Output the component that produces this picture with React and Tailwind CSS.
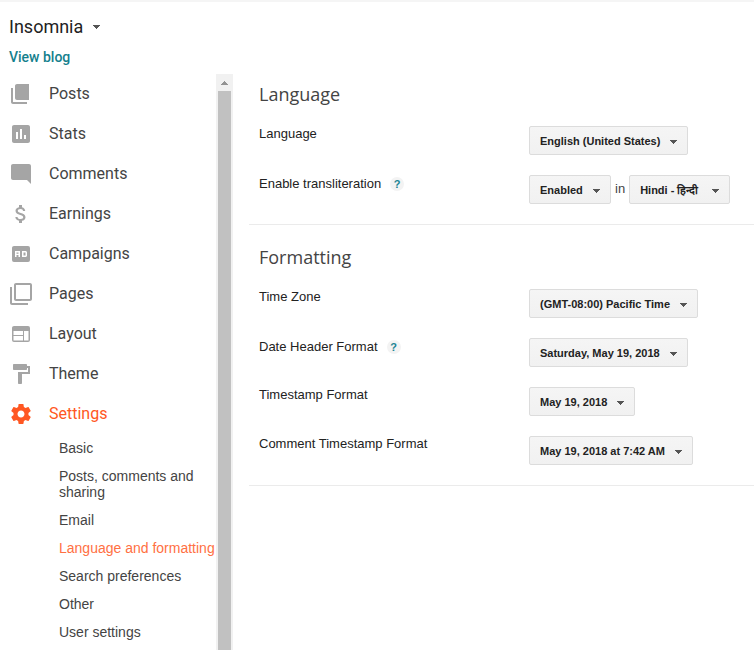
import React from "react";

const Svg = ({ children, className = "" }) => (
  <svg width="24" height="24" viewBox="0 0 24 24" fill="currentColor" className={"shrink-0 " + className}>
    {children}
  </svg>
);

const icons = {
  posts: <path d="M4 6H2v14c0 1.1.9 2 2 2h14v-2H4V6zm16-4H8c-1.1 0-2 .9-2 2v12c0 1.1.9 2 2 2h12c1.100 2-.9 2-2V4c0-1.100-.9-2-2-2zm-1 9H9V9h10v2zm-4 4H9v-2h6v2zm4-8H9V5h10v2z" />,
  stats: <path d="M19 3H5c-1.100 0-2 .9-2 2v14c0 1.100.9 2 2 2h14c1.100 0 2-.9 2-2V5c0-1.100-.9-2-2-2zM9 17H7v-7h2v7zm4 0h-2V7h2v10zm4 0h-2v-4h2v4z" />,
  comments: <path d="M21.990 4c0-1.100-.89-2-1.990-2H4c-1.100 0-2 .9-2 2v12c0 1.100.9 2 2 2h14l4 4-.01-18z" />,
  earnings: <path d="M11.800 10.900c-2.270-.59-3-1.200-3-2.150 0-1.090 1.010-1.850 2.700-1.850 1.780 0 2.440.85 2.500 2.100h2.210c-.07-1.720-1.120-3.300-3.210-3.810V3h-3v2.160c-1.940.42-3.500 1.680-3.500 3.610 0 2.310 1.910 3.460 4.700 4.130 2.500.6 3 1.480 3 2.410 0 .69-.49 1.790-2.700 1.790-2.060 0-2.870-.92-2.980-2.100h-2.200c.12 2.190 1.760 3.420 3.680 3.830V21h3v-2.150c1.950-.37 3.500-1.500 3.500-3.550 0-2.840-2.430-3.810-4.700-4.400z" />,
  campaigns: <path fillRule="evenodd" d="M5 4h14a2 2 0 0 1 2 2v12a2 2 0 0 1-2 2H5a2 2 0 0 1-2-2V6c0-1.100.9-2 2-2zm1 5v6h1.500v-2H9.500v2H11V9H6zm1.500 1.500H9.500v1.200H7.500v-1.200zM13 9v6h4l1-1v-4l-1-1h-4zm1.500 1.500h2v3h-2v-3z" />,
  pages: <path d="M3 5H1v16c0 1.100.9 2 2 2h16v-2H3V5zm18-4H7c-1.100 0-2 .9-2 2v14c0 1.100.9 2 2 2h14c1.100 0 2-.9 2-2V3c0-1.100-.9-2-2-2zm0 16H7V3h14v14z" />,
  layout: <path fillRule="evenodd" d="M5 4h14a2 2 0 0 1 2 2v12a2 2 0 0 1-2 2H5a2 2 0 0 1-2-2V6c0-1.100.9-2 2-2zm-.5 5v4H14V9H4.500zm0 5v4.500H14V14H4.500zM15 9v9.500h4.500V9H15z" />,
  theme: <path d="M18 4V3c0-.55-.45-1-1-1H5c-.55 0-1 .45-1 1v4c0 .55.45 1 1 1h12c.55 0 1-.45 1-1V6h1v4H9v11c0 .55.45 1 1 1h2c.55 0 1-.45 1-1v-9h8V4h-3z" />,
  settings: <path d="M19.430 12.980c.04-.32.070-.64.070-.98s-.03-.66-.07-.98l2.110-1.650c.19-.15.240-.42.120-.64l-2-3.460c-.12-.22-.39-.3-.61-.22l-2.490 1c-.52-.4-1.080-.73-1.690-.98l-.38-2.650C14.460 2.180 14.250 2 14 2h-4c-.25 0-.46.18-.49.42l-.38 2.650c-.61.25-1.170.59-1.690.98l-2.490-1c-.23-.09-.49 0-.61.22l-2 3.460c-.13.22-.07.49.12.640l2.110 1.650c-.04.32-.07.65-.07.980s.03.66.07.980l-2.110 1.650c-.19.15-.24.42-.12.640l2 3.460c.12.22.39.3.61.220l2.490-1c.52.4 1.080.73 1.690.980l.38 2.650c.03.24.24.42.490.420h4c.25 0 .46-.18.490-.42l.38-2.650c.61-.25 1.170-.59 1.690-.98l2.490 1c.23.09.49 0 .61-.22l2-3.460c.12-.22.07-.49-.12-.64l-2.110-1.650zM12 15.500c-1.930 0-3.500-1.570-3.500-3.500s1.570-3.500 3.500-3.500 3.500 1.570 3.500 3.500-1.570 3.500-3.500 3.500z" />,
};

const nav = [
  ["posts", "Posts"],
  ["stats", "Stats"],
  ["comments", "Comments"],
  ["earnings", "Earnings"],
  ["campaigns", "Campaigns"],
  ["pages", "Pages"],
  ["layout", "Layout"],
  ["theme", "Theme"],
  ["settings", "Settings"],
];

const subnav = ["Basic", "Posts, comments and sharing", "Email", "Language and formatting", "Search preferences", "Other", "User settings"];

const Caret = ({ className = "" }) => (
  <svg width="7" height="4" viewBox="0 0 7 4" shapeRendering="crispEdges" className={"shrink-0 " + className}>
    <path d="M0 0h7v1h-1v1h-1v1h-1v1h-1v-1h-1v-1h-1v-1h-1z" fill="#555" />
  </svg>
);

const Select = ({ children, width }) => (
  <button className={"flex h-[29px] items-center justify-between rounded-[2px] border border-[#dcdcdc] bg-linear-to-b from-[#f5f5f5] to-[#f1f1f1] pt-px pr-[10px] pl-[10px] text-[11px] font-bold whitespace-nowrap text-[#222] " + width}>
    <span>{children}</span>
    <Caret className="mt-0.5" />
  </button>
);

const Row = ({ label, help, children }) => (
  <div className="flex h-[49px] items-start">
    <div className="flex w-[270px] items-center text-[13px] leading-[15px] text-[#222]">
      <span>{label}</span>
      {help && <span className="mt-0.5 ml-[9px] flex size-[14px] items-center justify-center rounded-full bg-[#f3f3f3] text-[11px] leading-none font-bold text-[#1c8493]">?</span>}
    </div>
    <div className="flex items-start text-[13px]">{children}</div>
  </div>
);

export default function App() {
  return (
    <div className="flex h-[650px] w-[754px] flex-col overflow-hidden border-t-2 border-[#f5f5f5] bg-white font-['Liberation_Sans',sans-serif]">
      <header className="h-[72px] shrink-0 pt-[13px] pl-[9px] font-['Roboto',sans-serif]">
        <div className="flex items-center text-[18px] leading-6 text-[#222]">
          <span>Insomnia</span>
          <Caret className="ml-[10px]" />
        </div>
        <div className="mt-2 text-[14px] leading-5 font-medium text-[#15808d]">View blog</div>
      </header>
      <div className="flex min-h-0 flex-1">
        <nav className="w-[216px] shrink-0">
          {nav.map(([icon, label]) => (
            <div key={icon} className={"flex h-10 items-center pl-[9px] font-['Roboto',sans-serif] text-[16px] " + (icon === "settings" ? "text-[#ff5722]" : "text-[#a5a5a5]")}>
              <Svg>{icons[icon]}</Svg>
              <span className={"ml-4 " + (icon === "settings" ? "" : "text-[#444]")}>{label}</span>
            </div>
          ))}
          <ul className="mt-[6px] ml-[59px] flex flex-col gap-3 text-[14px] leading-4 text-[#444]">
            {subnav.map((s) => (
              <li key={s} className={s.startsWith("Language") ? "whitespace-nowrap text-[#ff7043]" : "w-[150px]"}>{s}</li>
            ))}
          </ul>
        </nav>
        <div className="flex w-[17px] shrink-0 flex-col items-center bg-[#f1f1f1]">
          <div className="flex h-[17px] items-center">
            <Caret className="rotate-180 opacity-60" />
          </div>
          <div className="w-[13px] flex-1 bg-[#c1c1c1]" />
        </div>
        <main className="ml-4 flex-1">
          <section className="h-[151px] border-b border-[#ebebeb] pt-2 pl-[10px]">
            <h2 className="mb-[17px] font-['Open_Sans',sans-serif] text-[18px] leading-6 text-[#444]">Language</h2>
            <div className="pt-[3px]">
              <Row label="Language"><Select width="w-[159px]">English (United States)</Select></Row>
              <Row label="Enable transliteration" help>
                <Select width="w-[82px]">Enabled</Select>
                <span className="mx-1 mt-1 text-[#444]">in</span>
                <Select width="w-[101px]">Hindi - हिन्दी</Select>
              </Row>
            </div>
          </section>
          <section className="h-[261px] border-b border-[#ebebeb] pt-5 pl-[10px]">
            <h2 className="mb-[17px] font-['Open_Sans',sans-serif] text-[18px] leading-6 text-[#444]">Formatting</h2>
            <div className="pt-[3px]">
              <Row label="Time Zone"><Select width="w-[169px]">(GMT-08:00) Pacific Time</Select></Row>
              <Row label="Date Header Format" help><Select width="w-[159px]">Saturday, May 19, 2018</Select></Row>
              <Row label="Timestamp Format"><Select width="w-[106px]">May 19, 2018</Select></Row>
              <Row label="Comment Timestamp Format"><Select width="w-[164px]">May 19, 2018 at 7:42 AM</Select></Row>
            </div>
          </section>
        </main>
      </div>
    </div>
  );
}
